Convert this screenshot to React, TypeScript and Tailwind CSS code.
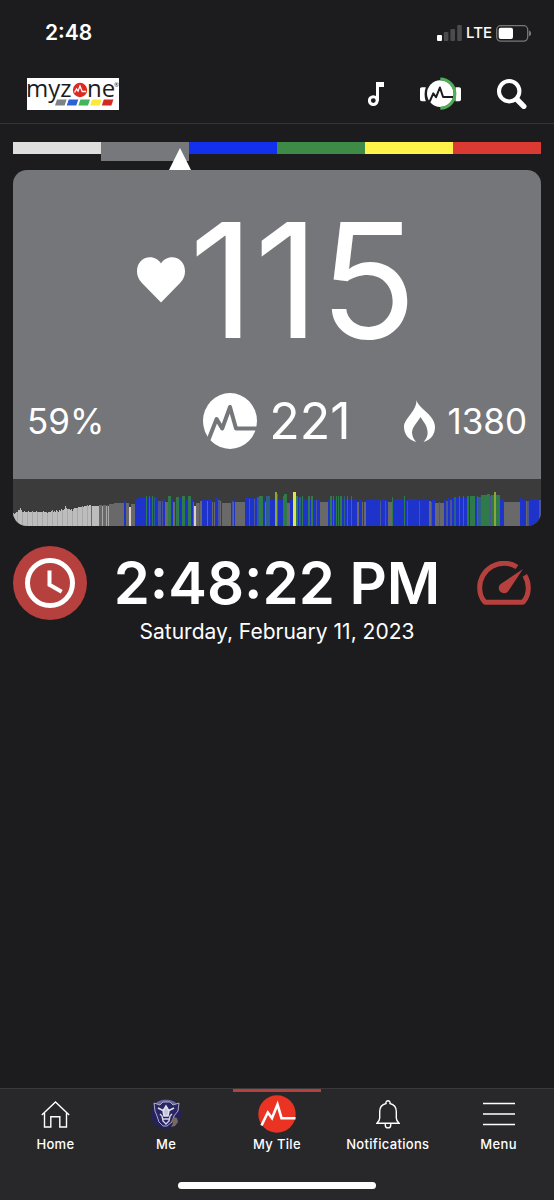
import type { ReactNode } from 'react'
import { clsx } from 'clsx'

type Bar = [color: string, width: number, height: number]

// Warm-up part of the effort history, one height per pixel column
const REST_HEIGHTS = [
  13, 12, 13, 14, 14, 16, 16, 18, 16, 14, 14, 15, 14, 14, 14, 15, 14, 14, 14, 15, 14, 14, 14, 15, 14, 14,
  14, 14, 14, 14, 15, 14, 14, 14, 13, 14, 14, 14, 15, 16, 14, 15, 14, 16, 15, 14, 16, 15, 17, 16, 16, 17,
  20, 18, 17, 17, 17, 16, 17, 15, 17, 18, 18, 18, 18, 19, 19, 19, 19, 20, 19, 20, 20, 20, 21, 20, 21, 21,
]

const COLORS: Record<string, string> = {
  l: '#bdbdbd',
  m: '#a8a8a8',
  g: '#696969',
  w: '#ddd0c2',
  b: '#1d33c9',
  s: '#4a5596',
  t: '#2b5f86',
  n: '#2f7a48',
  y: '#e0e34c',
  o: '#8aa83a',
}

// The rest of the workout: zone colour, run length, height
const RUNS: Bar[] = [
  ['g', 1, 20], ['l', 7, 20], ['g', 3, 21], ['m', 1, 20], ['g', 3, 21], ['m', 1, 20], ['g', 1, 21], ['m', 1, 20],
  ['g', 5, 22], ['g', 10, 23], ['b', 2, 25], ['g', 3, 23], ['w', 2, 19], ['g', 4, 22], ['b', 3, 26], ['b', 6, 28],
  ['b', 1, 28], ['n', 1, 30], ['b', 2, 28], ['n', 1, 30], ['b', 2, 28], ['n', 1, 30], ['b', 1, 28], ['t', 1, 29],
  ['b', 3, 28], ['s', 3, 25], ['b', 1, 26], ['s', 1, 25], ['b', 2, 27], ['g', 3, 24], ['n', 3, 30], ['b', 2, 27],
  ['g', 2, 24], ['b', 1, 27], ['n', 3, 29], ['b', 3, 28], ['n', 3, 30], ['b', 3, 27], ['n', 3, 30], ['b', 2, 27],
  ['g', 1, 24], ['w', 2, 20], ['g', 3, 23], ['s', 1, 23], ['g', 2, 25], ['b', 5, 26], ['g', 1, 25], ['b', 4, 27],
  ['g', 1, 24], ['b', 1, 25], ['g', 1, 24], ['b', 3, 28], ['s', 2, 26], ['g', 1, 25], ['b', 1, 26], ['g', 9, 23],
  ['b', 1, 26], ['s', 1, 25], ['g', 1, 24], ['b', 1, 26], ['g', 10, 24], ['b', 4, 28], ['s', 1, 27], ['b', 4, 28],
  ['s', 1, 27], ['b', 2, 28], ['t', 2, 29], ['n', 4, 30], ['b', 2, 26], ['g', 1, 24], ['t', 4, 30], ['b', 5, 26],
  ['o', 2, 34], ['n', 1, 32], ['b', 5, 26], ['n', 1, 30], ['n', 3, 32], ['g', 3, 23], ['b', 3, 26], ['y', 3, 34],
  ['n', 2, 30], ['b', 1, 28], ['t', 2, 29], ['b', 1, 28], ['n', 1, 30], ['b', 5, 27], ['n', 2, 30], ['b', 1, 27],
  ['n', 2, 30], ['b', 3, 26], ['s', 1, 26], ['b', 3, 27], ['g', 8, 24], ['b', 2, 26], ['n', 2, 30], ['b', 1, 27],
  ['n', 1, 30], ['b', 2, 27], ['n', 1, 30], ['b', 1, 27], ['n', 1, 30], ['b', 1, 27], ['n', 2, 30], ['b', 2, 27],
  ['t', 1, 30], ['b', 2, 27], ['n', 1, 30], ['b', 3, 27], ['n', 1, 30], ['b', 5, 26], ['g', 2, 24], ['b', 3, 26],
  ['g', 1, 24], ['b', 1, 25], ['g', 2, 24], ['b', 5, 26], ['b', 9, 27], ['s', 1, 25], ['b', 4, 27], ['s', 1, 25],
  ['b', 2, 26], ['g', 4, 24], ['n', 1, 29], ['b', 11, 27], ['n', 1, 30], ['b', 2, 26], ['s', 1, 25], ['b', 10, 27],
  ['s', 1, 25], ['b', 9, 26], ['g', 2, 25], ['s', 1, 24], ['b', 3, 26], ['g', 4, 23], ['s', 1, 24], ['g', 4, 23],
  ['b', 2, 26], ['s', 2, 25], ['b', 2, 28], ['s', 2, 26], ['b', 2, 28], ['t', 2, 29], ['b', 3, 28], ['n', 1, 30],
  ['b', 3, 28], ['n', 1, 30], ['b', 3, 28], ['n', 2, 30], ['b', 1, 28], ['n', 5, 30], ['b', 2, 28], ['n', 1, 30],
  ['t', 3, 29], ['n', 6, 31], ['n', 3, 32], ['s', 1, 30], ['n', 3, 31], ['o', 2, 34], ['n', 4, 31], ['b', 4, 26],
  ['g', 16, 24], ['b', 2, 28], ['b', 4, 26], ['g', 1, 25], ['s', 2, 25], ['b', 4, 26], ['b', 6, 27], ['s', 2, 26],
]

const bars: Bar[] = [...REST_HEIGHTS.map((h, i): Bar => [i % 5 === 4 ? 'm' : 'l', 1, h]), ...RUNS]
const TOTAL = bars.reduce((sum, [, w]) => sum + w, 0)

function EffortChart() {
  let x = 0
  return (
    <svg viewBox={`0 0 ${TOTAL} 47`} preserveAspectRatio="none" className="block h-[47px] w-full" aria-hidden="true">
      {bars.map(([color, w, h], i) => {
        const left = x
        x += w
        return (
          <rect key={i} x={left} y={47 - h} width={w} height={h} fill={COLORS[color]} shapeRendering="crispEdges" />
        )
      })}
    </svg>
  )
}

function Logo() {
  const swatches = ['#808184', '#2c62d6', '#43b65a', '#fbe93b', '#d42a22']
  return (
    <svg
      viewBox="0 0 92 32"
      className="block h-8 w-[92px] overflow-visible bg-white"
      role="img"
      aria-label="myzone"
    >
      <g fontFamily="'Open Sans', sans-serif" fontSize="24" fill="#1c1c1e">
        <text x="-1" y="19">myz</text>
        <text x="60" y="19">ne</text>
        <text x="87" y="9" fontSize="6">®</text>
      </g>
      <circle cx="53" cy="12" r="7.2" fill="#dc2a22" />
      <path d="M47.5 14.5l2-3.5 1.5 2.2 2-5.2 2.2 5.5H59" fill="none" stroke="#fff" strokeWidth="1.3" />
      {swatches.map((c, i) => (
        <path key={c} d={`M${30 + i * 11.7} 21.5h9.6l-2 6h-9.6z`} fill={c} />
      ))}
    </svg>
  )
}

function StatusBar() {
  return (
    <div className="flex h-16 items-center justify-between pt-0.5 pr-[23px] pl-[45px] text-white">
      <span className="text-[21px] leading-6 font-semibold">2:48</span>
      <div className="flex items-center gap-1">
        <svg viewBox="0 0 25 16" className="h-4 w-[25px]" aria-hidden="true">
          <rect x="0" y="10" width="5" height="6" rx="1" fill="#fff" />
          <rect x="6.8" y="7" width="4.6" height="9" rx="1" fill="#4b4b4d" />
          <rect x="13.4" y="4" width="4.6" height="12" rx="1" fill="#4b4b4d" />
          <rect x="20.2" y="0" width="4.6" height="16" rx="1" fill="#4b4b4d" />
        </svg>
        <span className="text-[15px] leading-5 font-medium">LTE</span>
        <svg viewBox="0 0 35 17" className="h-[17px] w-[35px]" aria-hidden="true">
          <rect x=".7" y=".7" width="31" height="15.4" rx="4" fill="none" stroke="#77777a" strokeWidth="1.3" />
          <rect x="2.7" y="2.7" width="14.3" height="11.4" rx="2" fill="#fff" />
          <path d="M33 5.6c1.6.6 2.2 1.7 2.2 2.8s-.6 2.2-2.2 2.8z" fill="#77777a" />
        </svg>
      </div>
    </div>
  )
}

function Header() {
  return (
    <header className="flex h-[60px] items-center justify-between border-b border-[#343436] px-[27px]">
      <a href="#home">
        <Logo />
      </a>
      <div className="flex items-center gap-9">
        <button aria-label="Music">
          <svg viewBox="0 0 16 24" className="block h-6 w-4">
            <circle cx="5.3" cy="18.6" r="3.9" fill="none" stroke="#fff" strokeWidth="3" />
            <path d="M8 0h8v5h-5v14H8z" fill="#fff" />
          </svg>
        </button>
        <button aria-label="Monitor">
          <svg viewBox="0 0 41 33" className="block h-[33px] w-[41px]">
            <path d="M2 10.3h3.8c-1.6 4-1.6 10 0 14H2c-1.3 0-2-.7-2-2v-10c0-1.3.7-2 2-2z" fill="#fff" />
            <path d="M35.5 10.3H39c1.3 0 2 .7 2 2v10c0 1.3-.7 2-2 2h-3.5z" fill="#fff" />
            <circle cx="20.3" cy="16.6" r="13.3" fill="#fff" />
            <path d="M20.3 2a14.6 14.6 0 0 1 0 29.2" fill="none" stroke="#4fae57" strokeWidth="3" />
            <path
              d="M9.5 25l3.8-8.7 2.7 4 3.9-9.8 3.2 9.5H33"
              fill="none"
              stroke="#1c1c1e"
              strokeWidth="2"
              strokeLinejoin="round"
            />
          </svg>
        </button>
        <button aria-label="Search">
          <svg viewBox="0 0 30 30" className="block h-[30px] w-[30px]" fill="none" stroke="#fff">
            <circle cx="12.2" cy="12.2" r="10.2" strokeWidth="4" />
            <path d="M20 20.5l6.8 6.8" strokeWidth="5.4" strokeLinecap="round" />
          </svg>
        </button>
      </div>
    </header>
  )
}

function ZoneBar() {
  return (
    <div className="relative flex h-7 items-start">
      <div className="h-3 flex-1 bg-[#dededd]" />
      <div className="h-[19px] flex-1 bg-[#77787b]" />
      <div className="h-3 flex-1 bg-[#1330ee]" />
      <div className="h-3 flex-1 bg-[#3d8b47]" />
      <div className="h-3 flex-1 bg-[#fff34a]" />
      <div className="h-3 flex-1 bg-[#da3a31]" />
      <svg
        viewBox="0 0 22 22"
        className="absolute bottom-0 left-[31.6%] h-[22px] w-[22px] -translate-x-1/2"
        aria-hidden="true"
      >
        <path d="M11 0l11 22H0z" fill="#fff" />
      </svg>
    </div>
  )
}

function TileCard() {
  return (
    <section className="overflow-hidden rounded-[14px] bg-[#757679] text-white">
      <div className="flex h-[219px] items-center justify-center gap-1">
        <svg viewBox="0 0 48 46" className="h-[46px] w-12" aria-hidden="true">
          <path
            d="M24 45.5L4.500 25.500C1.500 22.300 0 18.500 0 14.200 0 6 5.500.3 13 .3c4.600 0 8.600 2.400 11 6.200C26.400 2.700 30.400.3 35 .3c7.500 0 13 5.700 13 13.900 0 4.300-1.500 8.100-4.500 11.300z"
            fill="#fff"
          />
        </svg>
        <span className="text-[160px] leading-none">115</span>
      </div>
      <div className="grid grid-cols-3 items-center px-[14px] pt-0.5 pb-7">
        <span className="text-[35px] leading-[60px]">59%</span>
        <div className="flex items-center justify-center gap-3">
          <svg viewBox="0 0 54 56" className="h-14 w-[54px] shrink-0" aria-hidden="true">
            <ellipse cx="27" cy="28" rx="27" ry="28" fill="#fff" />
            <path
              d="M5 48l8.6-22 5.600 9.500L27 14l6 21.500h22"
              fill="none"
              stroke="#757679"
              strokeWidth="4"
              strokeLinejoin="round"
            />
          </svg>
          <span className="text-[50px] leading-[60px]">221</span>
        </div>
        <div className="flex items-center justify-end gap-3">
          <svg viewBox="0 0 31 42" className="h-[42px] w-[31px] shrink-0" aria-hidden="true">
            <path
              d="M12.5 0C14 8 31 15 31 27c0 7-4 13-11.500 15 4.500-5 5-9 3-15-1.200-3.800-4-6.500-6-10-2 4-8.500 10-8.500 15.500 0 3.500 2 7 4.200 9.500C4.500 40 0 34 0 27 0 18 12.500 12 12.500 0z"
              fill="#fff"
            />
          </svg>
          <span className="text-[35px] leading-[60px]">1380</span>
        </div>
      </div>
      <div className="bg-[#3b3b3c]">
        <EffortChart />
      </div>
    </section>
  )
}

function ClockPanel() {
  return (
    <section className="mt-5 flex items-start justify-between text-white">
      <button aria-label="Clock" className="shrink-0">
        <svg viewBox="0 0 74 74" className="block h-[74px] w-[74px]">
          <circle cx="37" cy="37" r="37" fill="#b5403d" />
          <g fill="none" stroke="#fff">
            <circle cx="37" cy="37" r="22.5" strokeWidth="5" />
            <path d="M36.5 24.5v14.3l12.200 7" strokeWidth="4" />
          </g>
        </svg>
      </button>
      <div className="text-center whitespace-nowrap">
        <div className="text-[58px] leading-[74px] font-semibold">2:48:22 PM</div>
        <div className="text-[21px] leading-6">Saturday, February 11, 2023</div>
      </div>
      <button aria-label="Gauge" className="flex h-[74px] w-[74px] shrink-0 items-center justify-center">
        <svg viewBox="0 0 54 44" className="h-11 w-[54px]">
          <path
            d="M40 6A24.3 24.3 0 0 0 2.700 27c0 5 1.600 10 4.800 13.600 .4.500.8.600 1.500.600h36c.7 0 1.100-.1 1.500-.6C49.700 37 51.300 32 51.300 27a24.300 24.300 0 0 0-3.500-12.600"
            fill="none"
            stroke="#b5403d"
            strokeWidth="5"
          />
          <path d="M46 8L31.2 30.2a5.3 5.3 0 1 1-7.600-7.300z" fill="#b5403d" />
        </svg>
      </button>
    </section>
  )
}

function Avatar() {
  return (
    <svg viewBox="0 0 30 30" className="h-[30px] w-[30px]">
      <circle cx="15" cy="15" r="15" fill="#25215c" />
      <path d="M3 6C8-1 22-1 27 6l-4 3-8-3-8 3z" fill="#6c68a0" />
      <path d="M3 4l6 2 3-3h7l3 3 6-2-1 8-4 5-2 6-5 4h-4l-4-4-2-6-2-5z" fill="#2a2664" stroke="#a9aac6" />
      <path d="M7 9l6 3M23 9l-6 3M12 12l3-5 3 5-1 5h-4z" fill="#c3c4dc" stroke="#e0e1ee" strokeWidth="1.5" />
      <path d="M9 15l2 2 1 5 3 3 3-3 1-5 2-2M12 20h6" fill="none" stroke="#d5d6e4" strokeWidth="1.4" />
      <path d="M23 18l3 1 1 4-3 4-4 1 2-4-2-2z" fill="#7a6a58" />
    </svg>
  )
}

function NavItem({ label, active, children }: { label: string; active?: boolean; children: ReactNode }) {
  return (
    <a href="#" aria-current={active ? 'page' : undefined} className="flex flex-1 flex-col items-center">
      <span className={clsx('h-[3px] w-[88px]', active && 'bg-[#b5403d]')} />
      <span className="flex h-11 items-center justify-center">{children}</span>
      <span className="text-[13px] leading-4 font-medium tracking-wide">{label}</span>
    </a>
  )
}

function BottomNav() {
  return (
    <nav className="mt-auto border-t border-[#3a3a3c] bg-[#28282a] text-white">
      <div className="flex h-[93px]">
        <NavItem label="Home">
          <svg viewBox="0 0 29 27" className="h-[27px] w-[29px]" fill="none" stroke="#fff" strokeWidth="1.4">
            <path d="M.8 14L14.5 1l13.700 13M3.500 12v14h6.300V15.700h9V26h6.700V12" />
          </svg>
        </NavItem>
        <NavItem label="Me">
          <Avatar />
        </NavItem>
        <NavItem label="My Tile" active>
          <svg viewBox="0 0 38 38" className="h-[38px] w-[38px]">
            <circle cx="19" cy="19" r="18.7" fill="#ea3323" />
            <path d="M3.5 30.5l6.300-13 4.200 5.700L19.500 9.500l4 13.700h14" fill="none" stroke="#fff" strokeWidth="2.6" />
          </svg>
        </NavItem>
        <NavItem label="Notifications">
          <svg viewBox="0 0 24 29" className="h-[29px] w-6" fill="none" stroke="#fff" strokeWidth="1.4">
            <path d="M10 3.5a2.100 2.100 0 1 1 4 0c4 1 6.300 4 6.300 8v6.500c0 2 .7 3.500 2.800 5.300H.9c2.100-1.800 2.800-3.300 2.800-5.300v-6.500c0-4 2.300-7 6.300-8z" />
            <path d="M9.3 23.5v1.700a2.700 2.700 0 0 0 5.400 0v-1.700" />
          </svg>
        </NavItem>
        <NavItem label="Menu">
          <svg viewBox="0 0 32 24" className="h-6 w-8" stroke="#fff" strokeWidth="1.7">
            <path d="M0 1.5h32M0 12h32M0 22.5h32" />
          </svg>
        </NavItem>
      </div>
      <div className="mx-auto mb-[11px] h-[7px] w-[198px] rounded-full bg-white" />
    </nav>
  )
}

export default function App() {
  return (
    <div className="flex min-h-screen flex-col bg-[#1c1c1e] font-['Inter',sans-serif]">
      <StatusBar />
      <Header />
      <main className="px-[13px] pt-[18px]">
        <ZoneBar />
        <TileCard />
        <ClockPanel />
      </main>
      <BottomNav />
    </div>
  )
}
